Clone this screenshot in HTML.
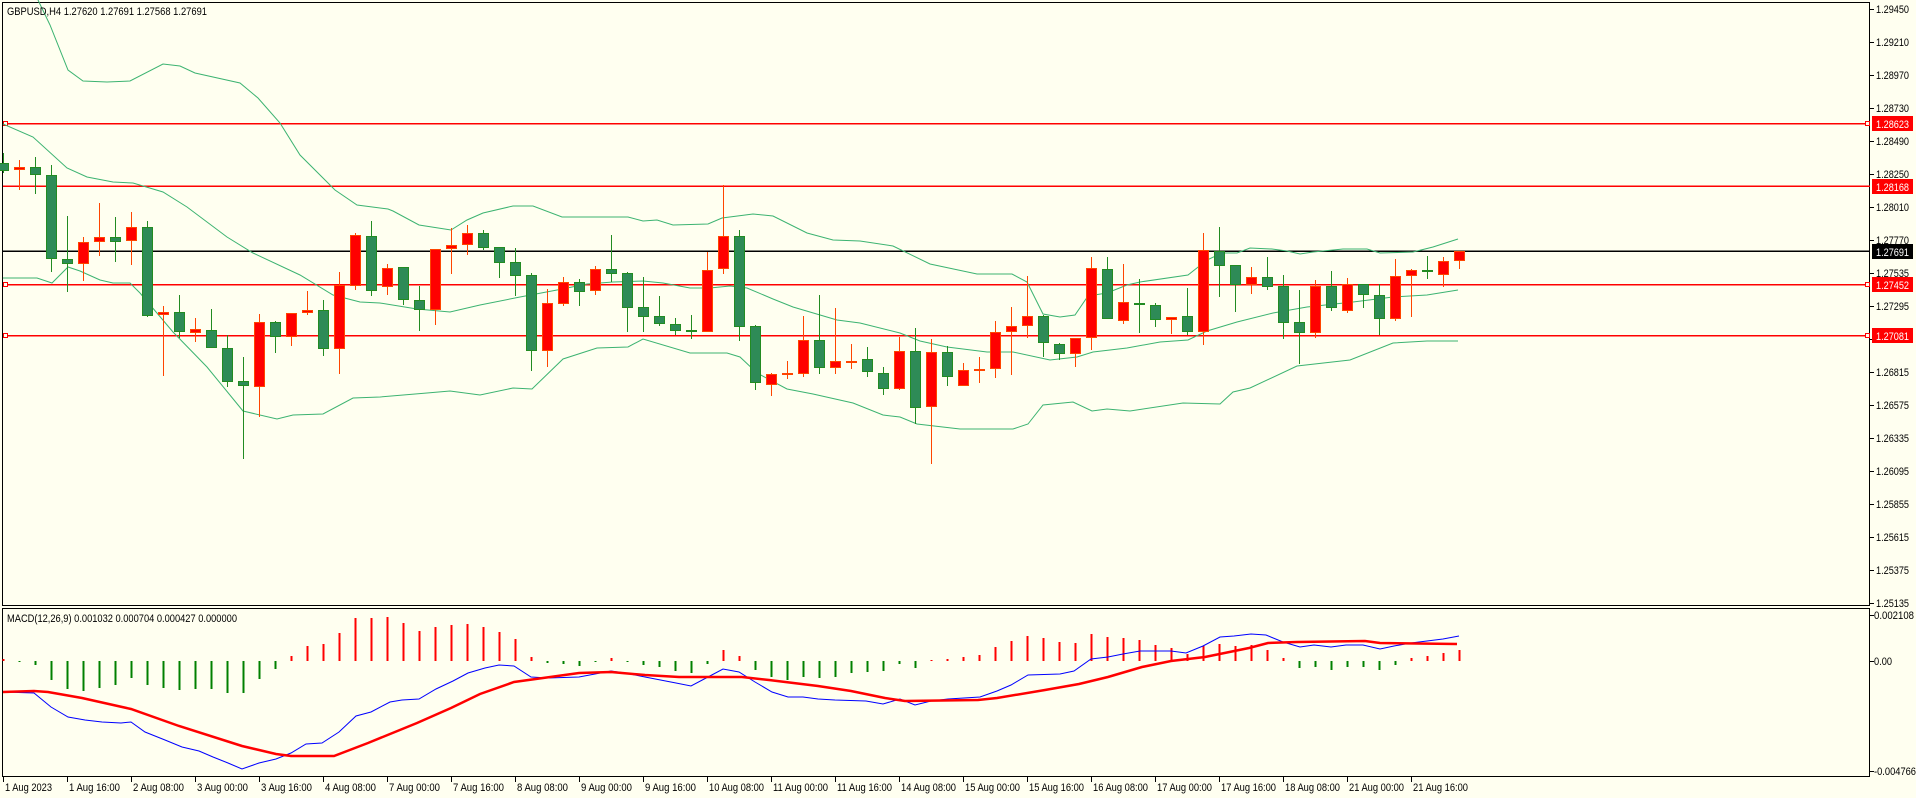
<!DOCTYPE html>
<html><head><meta charset="utf-8"><style>
html,body{margin:0;padding:0;background:#FFFFF0;width:1916px;height:798px;overflow:hidden}
svg{display:block}
text{font-family:"Liberation Sans",sans-serif;font-size:11px;fill:#000}
</style></head><body>
<svg id="c" width="1916" height="798" viewBox="0 0 1916 798" xmlns="http://www.w3.org/2000/svg" shape-rendering="crispEdges">
<rect width="1916" height="798" fill="#FFFFF0"/>
<rect x="2.5" y="2.5" width="1867" height="603" fill="none" stroke="#000"/>
<rect x="2.5" y="608.5" width="1867" height="168" fill="none" stroke="#000"/>
<g stroke="#FF0000" stroke-width="1.5">
<line x1="3" y1="123.5" x2="1870" y2="123.5"/>
<line x1="3" y1="186" x2="1870" y2="186"/>
<line x1="3" y1="284.5" x2="1870" y2="284.5"/>
<line x1="3" y1="335.5" x2="1870" y2="335.5"/>
</g>
<line x1="3" y1="251" x2="1870" y2="251" stroke="#000" stroke-width="1.5"/>
<g fill="#FFFFF0" stroke="#FF0000">
<rect x="3.5" y="121.5" width="4" height="4"/><rect x="3.5" y="282.5" width="4" height="4"/><rect x="3.5" y="333.5" width="4" height="4"/>
<rect x="1865.5" y="121.5" width="4" height="4"/><rect x="1865.5" y="282.5" width="4" height="4"/><rect x="1865.5" y="333.5" width="4" height="4"/>
</g>
<g id="bb" fill="none" stroke="#3CB371" stroke-width="1" shape-rendering="auto">
<polyline points="38,0 50,25 68,70 83,81 107,82 130,81 163,64 180,66 195,73 240,83 258,98 280,123 300,155 335,190 357,205 388,209 393,211 419,225 451,230 467,220 483,213 513,206 533,206 562,217 628,217 643,221 657,220 673,225 708,224 722,218 753,214 773,216 807,233 833,240 860,241 893,246 930,264 977,274 1012,274 1027,282 1043,314 1060,317 1075,315 1088,296 1107,293 1127,285 1140,282 1188,275 1207,260 1222,253 1237,253 1250,248 1272,249 1287,251 1300,254 1313,252 1343,249 1367,249 1380,253 1413,252 1433,247 1458,239"/>
<polyline points="3,124 33,137 67,168 87,177 113,182 133,183 163,192 187,207 227,237 253,253 300,275 333,295 360,302 380,303 417,309 450,312 480,305 520,297 557,290 587,284 613,282 643,281 663,283 690,288 710,288 730,286 747,288 773,299 793,307 837,320 860,323 900,333 920,341 947,347 987,352 1013,352 1050,360 1077,357 1093,352 1127,348 1160,342 1188,340 1207,331 1237,322 1273,313 1307,307 1353,302 1393,297 1427,295 1458,290"/>
<polyline points="3,278 37,278 52,283 68,267 80,271 100,280 113,283 130,283 140,293 173,332 207,367 243,411 277,419 293,415 323,414 353,398 380,397 427,393 450,391 480,395 513,388 532,389 563,359 597,348 628,347 643,339 690,353 727,353 740,357 757,373 787,389 813,394 853,403 883,415 900,417 917,424 960,429 1013,429 1028,424 1043,405 1073,402 1092,411 1107,409 1130,411 1183,403 1220,404 1233,392 1250,388 1297,366 1350,360 1393,343 1427,341 1458,341"/>
</g>
<g id="candles"></g>
<g id="hist"></g>
<polyline fill="none" stroke="#0000FF" stroke-width="1" shape-rendering="auto" points="3,692 34,693 51,707 68,717 85,720 102,722 121,723 131,722 145,732 165,740 182,747 199,751 213,757 228,763 242,769 259,763 276,759 291,753 306,744 322,743 339,732 356,716 371,712 390,702 402,700 419,699 436,689 453,681 468,673 485,668 499,665 514,666 531,677 548,678 579,677 611,671 625,673 645,677 676,683 691,686 708,677 723,669 739,672 755,682 772,692 788,697 803,697 818,699 835,700 866,701 883,704 900,699 915,705 931,701 948,699 980,697 997,691 1011,685 1028,675 1060,674 1074,671 1091,659 1108,657 1123,654 1140,651 1171,651 1186,653 1203,646 1220,637 1234,636 1251,634 1266,635 1283,642 1300,647 1314,645 1331,647 1346,645 1363,645 1380,649 1394,646 1411,643 1443,639 1459,636"/>
<polyline fill="none" stroke="#FF0000" stroke-width="2.5" shape-rendering="auto" points="3,692 34,691 48,692 82,698 131,709 179,726 242,746 276,754 291,756 334,756 368,743 417,723 451,708 480,694 514,682 543,678 579,673 611,672 645,675 679,677 742,677 769,680 818,686 851,691 885,698 905,701 978,700 997,698 1045,690 1079,684 1108,677 1142,667 1171,661 1205,657 1249,648 1268,643 1297,642 1365,641 1380,643 1457,644"/>
<text x="7" y="15" textLength="200" lengthAdjust="spacingAndGlyphs">GBPUSD,H4  1.27620 1.27691 1.27568 1.27691</text>
<text x="7" y="622" textLength="230" lengthAdjust="spacingAndGlyphs">MACD(12,26,9) 0.001032 0.000704 0.000427 0.000000</text>
<g stroke="#000" id="ticks"></g>
<g id="plabels">
<text x="1876" y="13" textLength="33" lengthAdjust="spacingAndGlyphs">1.29450</text>
<text x="1876" y="46" textLength="33" lengthAdjust="spacingAndGlyphs">1.29210</text>
<text x="1876" y="79" textLength="33" lengthAdjust="spacingAndGlyphs">1.28970</text>
<text x="1876" y="112" textLength="33" lengthAdjust="spacingAndGlyphs">1.28730</text>
<text x="1876" y="145" textLength="33" lengthAdjust="spacingAndGlyphs">1.28490</text>
<text x="1876" y="178" textLength="33" lengthAdjust="spacingAndGlyphs">1.28250</text>
<text x="1876" y="211" textLength="33" lengthAdjust="spacingAndGlyphs">1.28010</text>
<text x="1876" y="244" textLength="33" lengthAdjust="spacingAndGlyphs">1.27770</text>
<text x="1876" y="277" textLength="33" lengthAdjust="spacingAndGlyphs">1.27535</text>
<text x="1876" y="310" textLength="33" lengthAdjust="spacingAndGlyphs">1.27295</text>
<text x="1876" y="343" textLength="33" lengthAdjust="spacingAndGlyphs">1.27055</text>
<text x="1876" y="376" textLength="33" lengthAdjust="spacingAndGlyphs">1.26815</text>
<text x="1876" y="409" textLength="33" lengthAdjust="spacingAndGlyphs">1.26575</text>
<text x="1876" y="442" textLength="33" lengthAdjust="spacingAndGlyphs">1.26335</text>
<text x="1876" y="475" textLength="33" lengthAdjust="spacingAndGlyphs">1.26095</text>
<text x="1876" y="508" textLength="33" lengthAdjust="spacingAndGlyphs">1.25855</text>
<text x="1876" y="541" textLength="33" lengthAdjust="spacingAndGlyphs">1.25615</text>
<text x="1876" y="574" textLength="33" lengthAdjust="spacingAndGlyphs">1.25375</text>
<text x="1876" y="607" textLength="33" lengthAdjust="spacingAndGlyphs">1.25135</text>
</g>
<rect x="1872" y="116" width="41" height="15" fill="#FF0000"/>
<rect x="1872" y="179" width="41" height="15" fill="#FF0000"/>
<rect x="1872" y="244" width="41" height="15" fill="#000"/>
<rect x="1872" y="277" width="41" height="15" fill="#FF0000"/>
<rect x="1872" y="328" width="41" height="15" fill="#FF0000"/>
<g>
<text x="1876" y="128" textLength="33" lengthAdjust="spacingAndGlyphs" style="fill:#fff">1.28623</text>
<text x="1876" y="191" textLength="33" lengthAdjust="spacingAndGlyphs" style="fill:#fff">1.28168</text>
<text x="1876" y="256" textLength="33" lengthAdjust="spacingAndGlyphs" style="fill:#fff">1.27691</text>
<text x="1876" y="289" textLength="33" lengthAdjust="spacingAndGlyphs" style="fill:#fff">1.27452</text>
<text x="1876" y="340" textLength="33" lengthAdjust="spacingAndGlyphs" style="fill:#fff">1.27081</text>
</g>
<text x="1874" y="619" textLength="40" lengthAdjust="spacingAndGlyphs">0.002108</text>
<text x="1874" y="665" textLength="18" lengthAdjust="spacingAndGlyphs">0.00</text>
<text x="1874" y="775" textLength="42" lengthAdjust="spacingAndGlyphs">-0.004766</text>
<g id="tl">
<text x="5" y="791" textLength="47" lengthAdjust="spacingAndGlyphs">1 Aug 2023</text>
<text x="69" y="791" textLength="51" lengthAdjust="spacingAndGlyphs">1 Aug 16:00</text>
<text x="133" y="791" textLength="51" lengthAdjust="spacingAndGlyphs">2 Aug 08:00</text>
<text x="197" y="791" textLength="51" lengthAdjust="spacingAndGlyphs">3 Aug 00:00</text>
<text x="261" y="791" textLength="51" lengthAdjust="spacingAndGlyphs">3 Aug 16:00</text>
<text x="325" y="791" textLength="51" lengthAdjust="spacingAndGlyphs">4 Aug 08:00</text>
<text x="389" y="791" textLength="51" lengthAdjust="spacingAndGlyphs">7 Aug 00:00</text>
<text x="453" y="791" textLength="51" lengthAdjust="spacingAndGlyphs">7 Aug 16:00</text>
<text x="517" y="791" textLength="51" lengthAdjust="spacingAndGlyphs">8 Aug 08:00</text>
<text x="581" y="791" textLength="51" lengthAdjust="spacingAndGlyphs">9 Aug 00:00</text>
<text x="645" y="791" textLength="51" lengthAdjust="spacingAndGlyphs">9 Aug 16:00</text>
<text x="709" y="791" textLength="55" lengthAdjust="spacingAndGlyphs">10 Aug 08:00</text>
<text x="773" y="791" textLength="55" lengthAdjust="spacingAndGlyphs">11 Aug 00:00</text>
<text x="837" y="791" textLength="55" lengthAdjust="spacingAndGlyphs">11 Aug 16:00</text>
<text x="901" y="791" textLength="55" lengthAdjust="spacingAndGlyphs">14 Aug 08:00</text>
<text x="965" y="791" textLength="55" lengthAdjust="spacingAndGlyphs">15 Aug 00:00</text>
<text x="1029" y="791" textLength="55" lengthAdjust="spacingAndGlyphs">15 Aug 16:00</text>
<text x="1093" y="791" textLength="55" lengthAdjust="spacingAndGlyphs">16 Aug 08:00</text>
<text x="1157" y="791" textLength="55" lengthAdjust="spacingAndGlyphs">17 Aug 00:00</text>
<text x="1221" y="791" textLength="55" lengthAdjust="spacingAndGlyphs">17 Aug 16:00</text>
<text x="1285" y="791" textLength="55" lengthAdjust="spacingAndGlyphs">18 Aug 08:00</text>
<text x="1349" y="791" textLength="55" lengthAdjust="spacingAndGlyphs">21 Aug 00:00</text>
<text x="1413" y="791" textLength="55" lengthAdjust="spacingAndGlyphs">21 Aug 16:00</text>
</g>
</svg>
<script>
(function(){
var NS="http://www.w3.org/2000/svg";
function el(p,t,a){var e=document.createElementNS(NS,t);for(var k in a)e.setAttribute(k,a[k]);p.appendChild(e);return e;}
var C=[[163,171,153,173,'g'],[167,170,160,190,'r'],[167,175,157,194,'g'],[175,259,165,272,'g'],[259,264,216,292,'g'],[242,264,237,281,'r'],[237,242,203,256,'r'],[237,242,217,262,'g'],[227,241,212,265,'r'],[227,316,221,317,'g'],
[312,315,306,376,'r'],[312,332,295,338,'g'],[329,333,318,342,'r'],[330,348,309,348,'g'],[348,382,335,387,'g'],[381,386,357,459,'g'],[322,387,314,417,'r'],[322,337,321,353,'g'],[313,337,313,346,'r'],[310,313,291,315,'r'],
[310,349,300,356,'g'],[285,349,272,374,'r'],[235,286,233,290,'r'],[236,291,221,296,'g'],[268,287,264,295,'r'],[267,300,267,305,'g'],[300,310,286,331,'g'],[249,310,249,325,'r'],[245,249,228,274,'r'],[233,245,225,255,'r'],
[233,248,230,250,'g'],[247,263,247,278,'g'],[262,276,248,296,'g'],[275,351,273,371,'g'],[303,351,289,367,'r'],[282,304,277,306,'r'],[282,292,279,306,'g'],[269,291,266,295,'r'],[269,274,235,282,'g'],[273,308,272,332,'g'],
[307,317,277,332,'g'],[316,324,296,326,'g'],[324,331,318,335,'g'],[330,332,315,339,'g'],[270,332,252,332,'r'],[236,269,185,274,'r'],[236,327,230,341,'g'],[326,383,325,390,'g'],[374,385,373,396,'r'],[373,374,361,379,'r'],
[340,374,316,377,'r'],[340,368,295,374,'g'],[361,368,308,374,'r'],[361,362,344,369,'r'],[359,372,347,377,'g'],[373,389,367,395,'g'],[351,389,337,390,'r'],[351,408,328,424,'g'],[352,407,339,464,'r'],[352,377,346,386,'g'],
[370,386,363,386,'r'],[369,370,357,383,'r'],[332,369,321,378,'r'],[326,332,307,375,'r'],[316,326,276,338,'r'],[316,343,315,357,'g'],[344,354,343,360,'g'],[338,354,338,367,'r'],[268,338,257,350,'r'],[269,319,257,319,'g'],
[302,321,264,324,'r'],[303,305,279,333,'g'],[305,320,303,327,'g'],[317,320,317,334,'r'],[316,332,288,335,'g'],[250,332,233,345,'r'],[251,266,227,297,'g'],[265,285,265,312,'g'],[277,285,267,294,'r'],[277,287,257,290,'g'],
[286,323,275,339,'g'],[322,333,290,364,'g'],[286,333,280,338,'r'],[286,308,271,311,'g'],[284,311,278,313,'r'],[284,295,284,308,'g'],[295,319,284,335,'g'],[276,319,259,321,'r'],[270,276,269,317,'r'],[270,272,256,279,'g'],
[261,275,257,287,'r'],[251,261,251,269,'r']];
var g=document.getElementById('candles');
C.forEach(function(c,i){
 var x=Math.round(3.3+16*i);var red=c[4]=='r';
 var wc=red?'#FF4500':'#228B22', fc=red?'#FF0000':'#2E8B57';
 el(g,'line',{x1:x+0.5,x2:x+0.5,y1:c[2],y2:c[3],stroke:wc,'stroke-width':1});
 var h=c[1]-c[0]; if(h<2)h=2;
 el(g,'rect',{x:x-4.5,y:c[0]+0.5,width:10,height:h-1,fill:fc,stroke:wc,'stroke-width':1});
});
var H=[-2,1,4,19,28,30,27,24,17,24,27,29,28,28,32,32,18,8,-5,-15,-17,-28,-43,-43,-44,-38,-30,-34,-36,-37,-34,-29,-22,-4,2,3,5,1,-3,1,4,6,10,12,3,-11,-5,9,16,19,16,17,16,12,11,10,3,7,
-1,-2,-4,-6,-14,-20,-25,-23,-19,-18,-27,-24,-23,-21,-16,-13,-7,-15,-17,-15,-16,-11,-3,7,6,9,6,6,9,4,-3,-5,-8,-11];
var hg=document.getElementById('hist');
H.forEach(function(v,i){
 var x=Math.round(3.3+16*i);
 if(v<0) el(hg,'rect',{x:x-0.5,y:661+v,width:2,height:-v,fill:'#FF0000'});
 else el(hg,'rect',{x:x-0.5,y:661,width:2,height:v,fill:'#008000'});
});
var t=document.getElementById('ticks');
[9,42,75,108,141,174,207,240,273,306,339,372,405,438,471,504,537,570,603,615,661,771].forEach(function(y){el(t,'line',{x1:1870,x2:1874,y1:y+0.5,y2:y+0.5});});
for(var k=0;k<23;k++){var x=3+64*k;el(t,'line',{x1:x+0.5,x2:x+0.5,y1:777,y2:782});}
})();
</script>
</body></html>
